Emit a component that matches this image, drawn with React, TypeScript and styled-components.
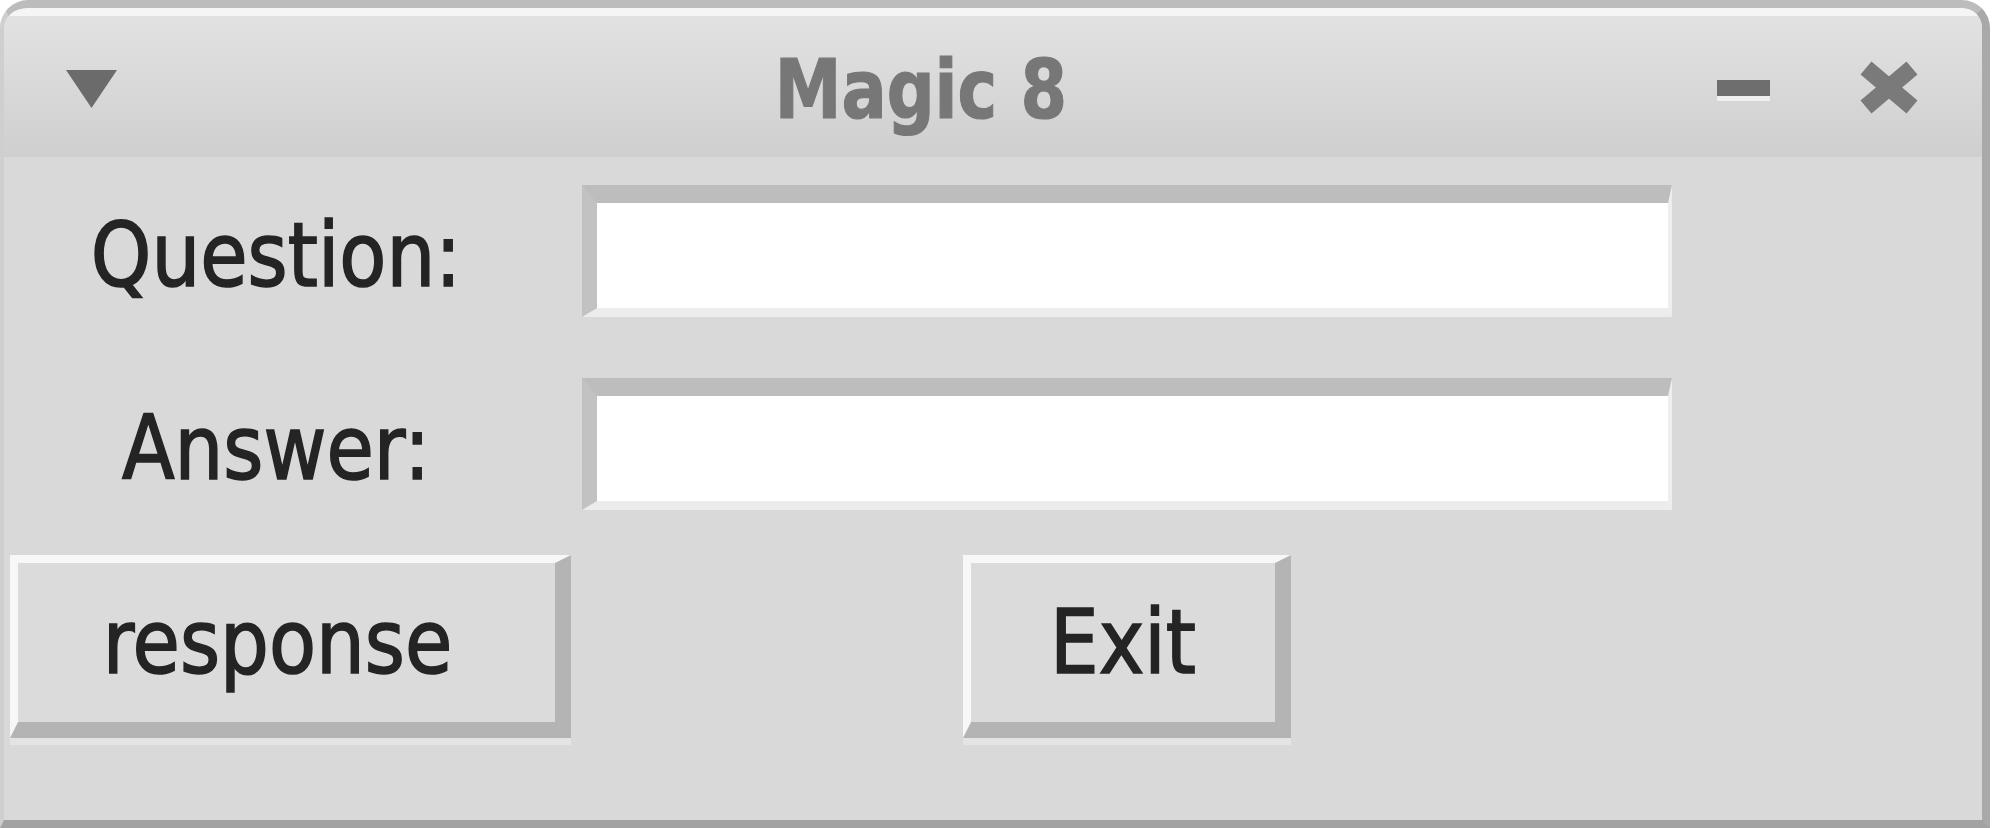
import React from "react";
import styled, {createGlobalStyle} from "styled-components";

const GlobalStyle = createGlobalStyle`
    html, body {
        margin: 0;
        padding: 0;
        background: #ffffff;
    }
    body {
        font-family: "DejaVu Sans", "Liberation Sans", sans-serif;
    }
`

const Window = styled.div`
    box-sizing: border-box;
    width: 1990px;
    height: 828px;
    display: flex;
    flex-direction: column;
    background: #d9d9d9;
    border-style: solid;
    border-width: 8px 8px 8px 4px;
    border-color: #bcbcbc #a9a9a9 #a2a2a2 #cfcfcf;
    border-radius: 28px 28px 0 0;
    overflow: hidden;
`

const TitleBar = styled.div`
    box-sizing: border-box;
    flex: 0 0 149px;
    display: flex;
    align-items: center;
    padding: 8px 62px 0 62px;
    background: linear-gradient(to bottom, #f5f5f5 0, #f5f5f5 8px, #e2e2e2 8px, #cfcfcf 100%);
`

const MenuArrow = styled.svg`
    flex: 0 0 auto;
    margin-top: 5px;
`

const Title = styled.div`
    flex: 1;
    text-align: center;
    padding-left: 8px;
    margin-top: 8px;
`

const TitleText = styled.span`
    display: inline-block;
    font-family: "DejaVu Sans", sans-serif;
    font-weight: bold;
    font-size: 67px;
    line-height: 1;
    color: #777777;
    -webkit-text-stroke: 1px #777777;
    transform: scaleY(1.22);
`

const Controls = styled.div`
    display: flex;
    align-items: center;
    gap: 88px;
    margin-top: 2px;
`

const MinimizeBar = styled.div`
    width: 53px;
    height: 16px;
    background: #6e6e6e;
    box-shadow: 0 5px 0 #efefef;
`

const Form = styled.div`
    flex: 1;
    display: flex;
    flex-direction: column;
    padding: 28px 0 0 6px;
`

const FormRow = styled.div<{ $top: number }>`
    display: grid;
    grid-template-columns: 566px 1090px;
    column-gap: 6px;
    margin-top: ${p => p.$top}px;
`

const LabelCell = styled.div`
    display: flex;
    align-items: center;
    justify-content: center;
    padding: 8px 34px 0 0;
`

const Text = styled.span`
    display: inline-block;
    font-family: "DejaVu Sans", sans-serif;
    font-size: 77px;
    line-height: 1;
    color: #242424;
    -webkit-text-stroke: 1.5px #242424;
    transform: scaleY(1.15);
`

const Entry = styled.input`
    box-sizing: border-box;
    width: 100%;
    height: 132px;
    margin: 0;
    padding: 0 12px;
    background: #ffffff;
    border-style: solid;
    border-width: 18px 4px 9px 15px;
    border-color: #bdbdbd #eeeeee #ececec #c2c2c2;
    outline: none;
    font-family: "DejaVu Sans", sans-serif;
    font-size: 70px;
`

const Button = styled.button<{ $width: number; $padRight?: number }>`
    box-sizing: border-box;
    width: ${p => p.$width}px;
    height: 183px;
    margin: 0;
    padding: 0 ${p => p.$padRight ?? 0}px 0 0;
    background: #dbdbdb;
    border-style: solid;
    border-width: 8px 16px 16px 8px;
    border-color: #f7f7f7 #b4b4b4 #b4b4b4 #f7f7f7;
    border-radius: 0;
    box-shadow: 0 7px 0 #e4e4e4;
    cursor: pointer;
`

const ButtonCell = styled.div<{ $align: string }>`
    display: flex;
    justify-content: ${p => p.$align};
`

export default function App() {
    return (
        <>
            <GlobalStyle/>
            <Window>
                <TitleBar>
                    <MenuArrow width="51" height="38" viewBox="0 0 51 38">
                        <polygon points="0,0 51,0 25.5,38" fill="#6b6b6b"/>
                    </MenuArrow>
                    <Title>
                        <TitleText>Magic 8</TitleText>
                    </Title>
                    <Controls>
                        <MinimizeBar/>
                        <svg width="62" height="53" viewBox="0 0 62 53">
                            <path d="M8 7 L54 46 M54 7 L8 46" stroke="#7a7a7a" strokeWidth="17" fill="none"/>
                        </svg>
                    </Controls>
                </TitleBar>
                <Form>
                    <FormRow $top={0}>
                        <LabelCell><Text>Question:</Text></LabelCell>
                        <Entry type="text"/>
                    </FormRow>
                    <FormRow $top={61}>
                        <LabelCell><Text>Answer:</Text></LabelCell>
                        <Entry type="text"/>
                    </FormRow>
                    <FormRow $top={45}>
                        <ButtonCell $align="flex-start">
                            <Button $width={561} $padRight={18}><Text>response</Text></Button>
                        </ButtonCell>
                        <ButtonCell $align="center">
                            <Button $width={328}><Text>Exit</Text></Button>
                        </ButtonCell>
                    </FormRow>
                </Form>
            </Window>
        </>
    )
}
